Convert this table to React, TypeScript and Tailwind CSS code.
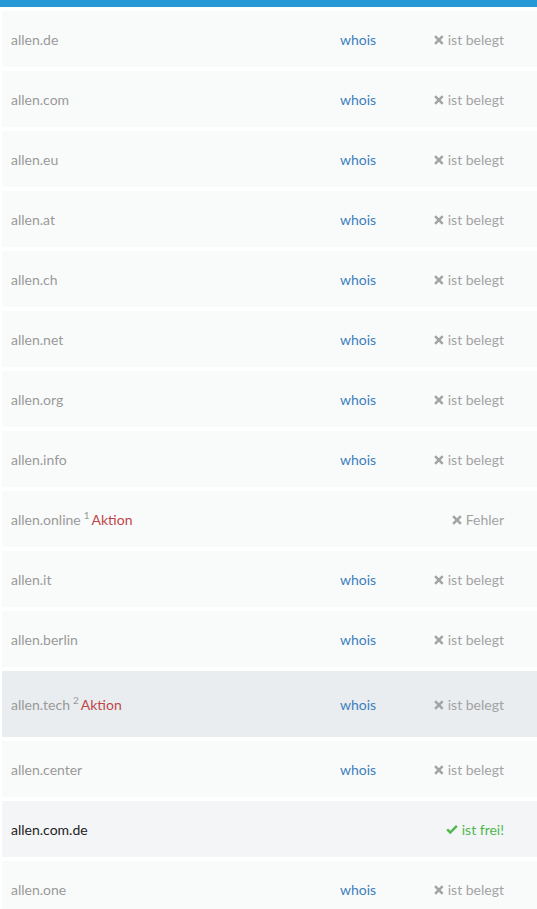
import React from "react";

type Row = {
  name: string;
  sup?: string;
  whois?: boolean;
  status: "taken" | "error" | "free";
  tall?: boolean;
  tone?: "hover" | "free";
};

const rows: Row[] = [
  { name: "allen.de", whois: true, status: "taken" },
  { name: "allen.com", whois: true, status: "taken" },
  { name: "allen.eu", whois: true, status: "taken" },
  { name: "allen.at", whois: true, status: "taken" },
  { name: "allen.ch", whois: true, status: "taken" },
  { name: "allen.net", whois: true, status: "taken" },
  { name: "allen.org", whois: true, status: "taken" },
  { name: "allen.info", whois: true, status: "taken" },
  { name: "allen.online", sup: "1", status: "error" },
  { name: "allen.it", whois: true, status: "taken" },
  { name: "allen.berlin", whois: true, status: "taken" },
  { name: "allen.tech", sup: "2", whois: true, status: "taken", tall: true, tone: "hover" },
  { name: "allen.center", whois: true, status: "taken" },
  { name: "allen.com.de", status: "free", tone: "free" },
  { name: "allen.one", whois: true, status: "taken" },
];

function Times() {
  return (
    <svg width="10" height="10" viewBox="0 0 10 10" className="mr-[4px] mt-[2px]">
      <path d="M2 0.2 L5 3.2 L8 0.2 L9.8 2 L6.8 5 L9.8 8 L8 9.8 L5 6.8 L2 9.8 L0.2 8 L3.2 5 L0.2 2 Z" fill="#a3a3a3" />
    </svg>
  );
}

function Check() {
  return (
    <svg width="12" height="10" viewBox="0 0 12 10" className="mr-[4px] mt-[2px]">
      <path d="M0.3 5.2 L2 3.5 L4.3 5.8 L10 0.1 L11.7 1.8 L4.3 9.2 Z" fill="#4fb84f" />
    </svg>
  );
}

export default function App() {
  return (
    <div className="min-h-[909px] bg-white text-[14px]" style={{ fontFamily: "Lato, 'Open Sans', sans-serif" }}>
      <div className="h-[7px] bg-[#2698d5]" />
      <div className="flex flex-col gap-[4px] pt-[4px] pl-[2px]">
        {rows.map((r) => (
          <div
            key={r.name}
            className={`flex items-center ${r.tall ? "h-[66px]" : "h-[56px]"} ${
              r.tone === "hover" ? "bg-[#e9edf0]" : r.tone === "free" ? "bg-[#f4f5f7]" : "bg-[#f9fbfb]"
            }`}
          >
            <div className="flex-1 pl-[9px] flex items-baseline">
              <span className={r.status === "free" ? "text-[#222]" : "text-[#999]"}>{r.name}</span>
              {r.sup && (
                <>
                  <span className="ml-[3px] text-[10px] text-[#999] relative -top-[6px]">{r.sup}</span>
                  <span className="ml-[2px] text-[#c0464a]">Aktion</span>
                </>
              )}
            </div>
            <div className="w-[94px] text-[#3d7fbd]">{r.whois ? "whois" : ""}</div>
            <div className="w-[70px] flex items-center justify-end text-[#a3a3a3] whitespace-nowrap">
              {r.status === "taken" && (
                <>
                  <Times />
                  ist belegt
                </>
              )}
              {r.status === "error" && (
                <>
                  <Times />
                  Fehler
                </>
              )}
              {r.status === "free" && (
                <span className="flex items-center text-[#4fb84f]">
                  <Check />
                  ist frei!
                </span>
              )}
            </div>
            <div className="w-[33px]" />
          </div>
        ))}
      </div>
    </div>
  );
}
